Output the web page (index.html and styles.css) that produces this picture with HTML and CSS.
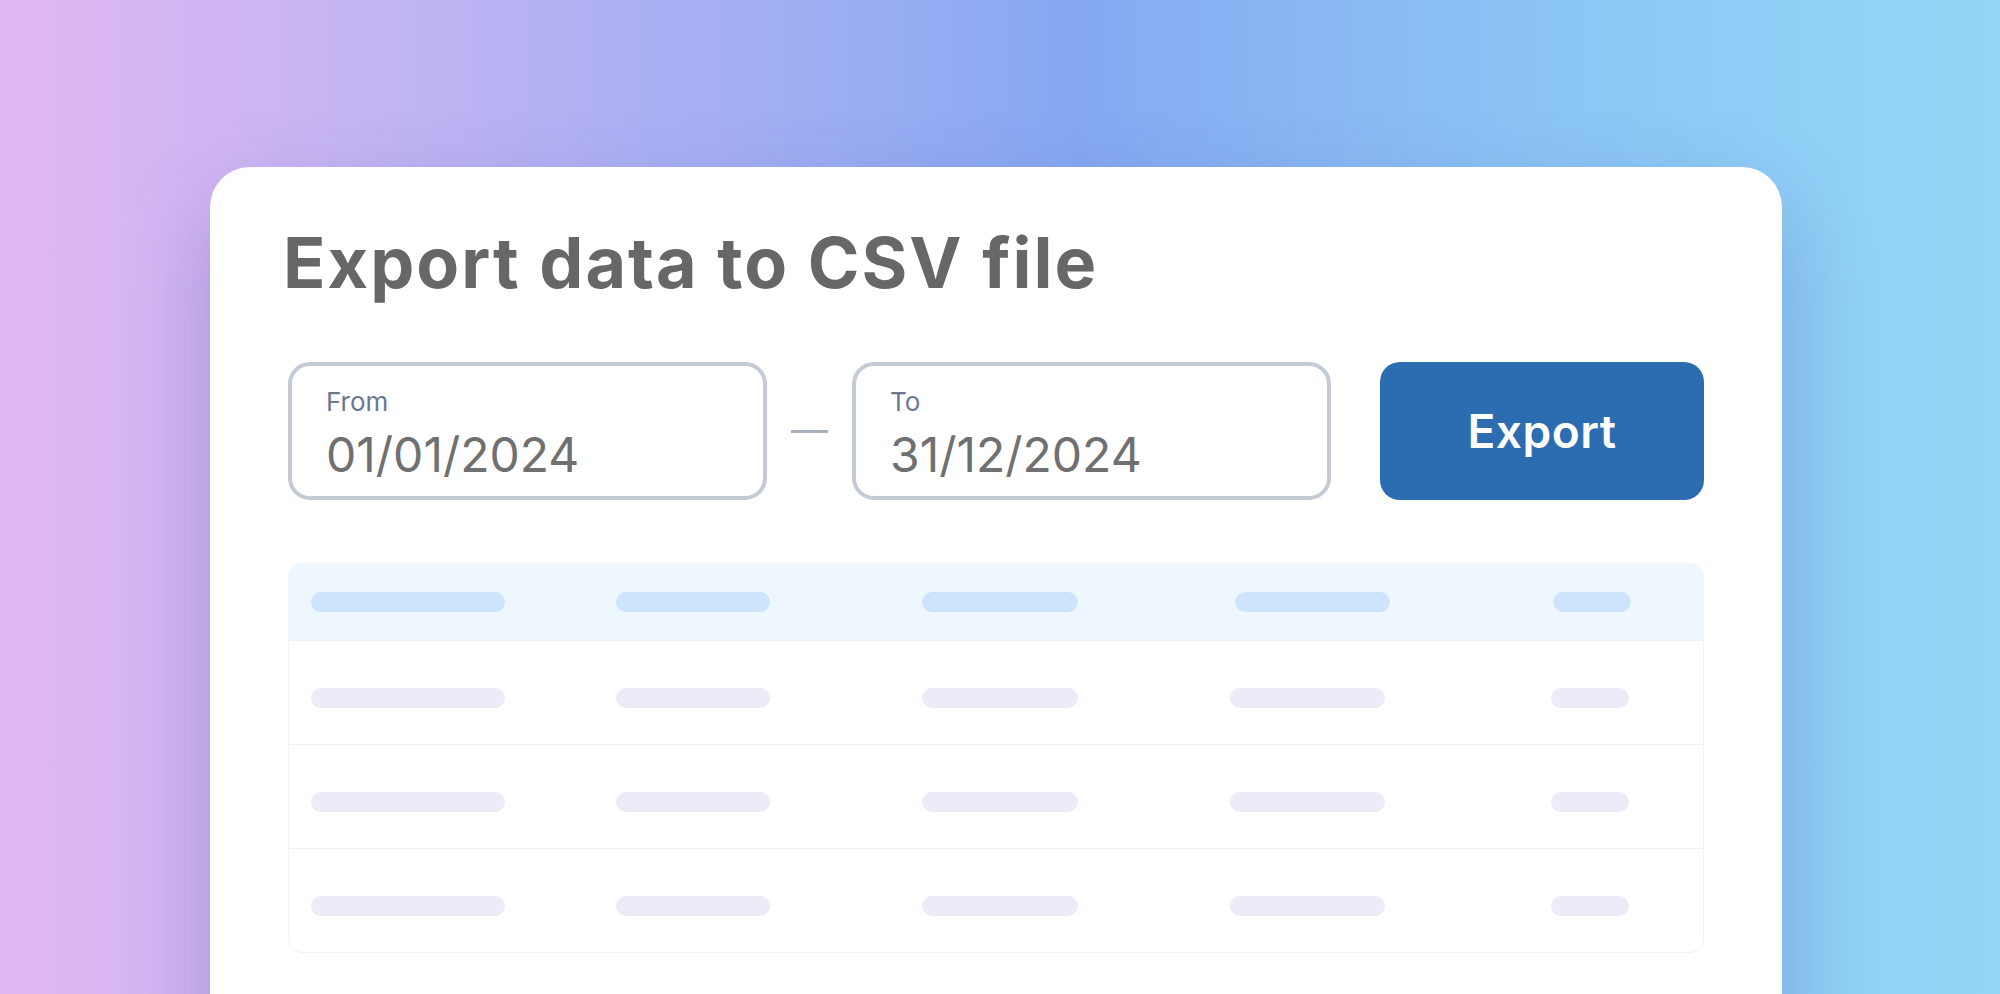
FILE: index.html
```html
<!DOCTYPE html>
<html lang="en">

<head>
    <meta charset="UTF-8">
    <meta name="viewport" content="width=device-width, initial-scale=1.0">
    <title>Export data to CSV file</title>
    <link rel="stylesheet" href="styles.css">
</head>

<body>
    <section class="card">
        <h1 class="title">Export data to CSV file</h1>

        <form class="exportForm" action="">
            <label class="dateBox">
                <span class="dateLabel">From</span>
                <input class="dateInput" type="text" value="01/01/2024">
            </label>
            <span class="dash"></span>
            <label class="dateBox">
                <span class="dateLabel">To</span>
                <input class="dateInput" type="text" value="31/12/2024">
            </label>
            <button class="exportBtn" type="submit">Export</button>
        </form>

        <div class="preview">
            <div class="row headRow">
                <span class="bar w1"></span>
                <span class="bar w2"></span>
                <span class="bar w3"></span>
                <span class="bar w4"></span>
                <span class="bar w5"></span>
            </div>
            <div class="row">
                <span class="bar w1"></span>
                <span class="bar w2"></span>
                <span class="bar w3"></span>
                <span class="bar w4"></span>
                <span class="bar w5"></span>
            </div>
            <div class="row">
                <span class="bar w1"></span>
                <span class="bar w2"></span>
                <span class="bar w3"></span>
                <span class="bar w4"></span>
                <span class="bar w5"></span>
            </div>
            <div class="row">
                <span class="bar w1"></span>
                <span class="bar w2"></span>
                <span class="bar w3"></span>
                <span class="bar w4"></span>
                <span class="bar w5"></span>
            </div>
        </div>
    </section>
</body>

</html>
```

FILE: styles.css
```css
* {
    padding: 0;
    margin: 0;
    box-sizing: border-box;
}

body {
    height: 994px;
    overflow: hidden;
    font-family: Inter, "Noto Sans", sans-serif;
    background: linear-gradient(90deg, #e2b8f2 0%, #b3b2f3 28%, #86a9f2 54%, #8bc4f4 76%, #93d7f7 100%);
}

.card {
    width: 1572px;
    min-height: 900px;
    margin: 167px 0 0 210px;
    padding: 54px 78px 0;
    background-color: #fff;
    border-radius: 40px;
    box-shadow: 0 40px 90px rgba(60, 60, 150, 0.28);
}

.title {
    font-size: 70px;
    line-height: 84px;
    font-weight: 700;
    letter-spacing: 2px;
    color: #676767;
    margin: 0 0 57px -5px;
}

.exportForm {
    display: flex;
    align-items: stretch;
    height: 138px;
}

.dateBox {
    width: 479px;
    border: 4px solid #c5cbd5;
    border-radius: 22px;
    padding: 20px 34px 0;
    display: flex;
    flex-direction: column;
}

.dateLabel {
    font-size: 26px;
    line-height: 31px;
    color: #6b7890;
}

.dateInput {
    margin-top: 8px;
    border: none;
    outline: none;
    background: none;
    font-family: Inter, "Noto Sans", sans-serif;
    font-size: 48px;
    line-height: 60px;
    height: 60px;
    color: #707070;
    width: 100%;
}

.dash {
    width: 37px;
    height: 3px;
    margin: 0 24px;
    align-self: center;
    background-color: #a9b1bd;
}

.exportBtn {
    flex: 1;
    margin-left: 49px;
    border: none;
    border-radius: 20px;
    background-color: #2c6cb0;
    color: #fff;
    font-family: Inter, "Noto Sans", sans-serif;
    font-size: 46px;
    font-weight: 600;
    letter-spacing: 0.5px;
    cursor: pointer;
}

.preview {
    margin-top: 63px;
    border: 1px solid #ebf3fb;
    border-radius: 14px;
    overflow: hidden;
}

.row {
    display: grid;
    grid-template-columns: 305px 306px 308px 321px 1fr;
    align-items: center;
    height: 104px;
    padding: 10px 22px 0;
    border-top: 1px solid #ebf2fa;
}

.headRow {
    height: 76px;
    padding-top: 0;
    border-top: none;
    background-color: #eef6fe;
}

.bar {
    display: block;
    height: 20px;
    border-radius: 10px;
    background-color: #ececf9;
}

.headRow .bar {
    background-color: #cde4fc;
}

.headRow .w4 {
    margin-left: 5px;
}

.headRow .w5 {
    margin-left: 2px;
}

.w1 {
    width: 194px;
}

.w2 {
    width: 154px;
}

.w3 {
    width: 156px;
}

.w4 {
    width: 155px;
}

.w5 {
    width: 78px;
}
```
